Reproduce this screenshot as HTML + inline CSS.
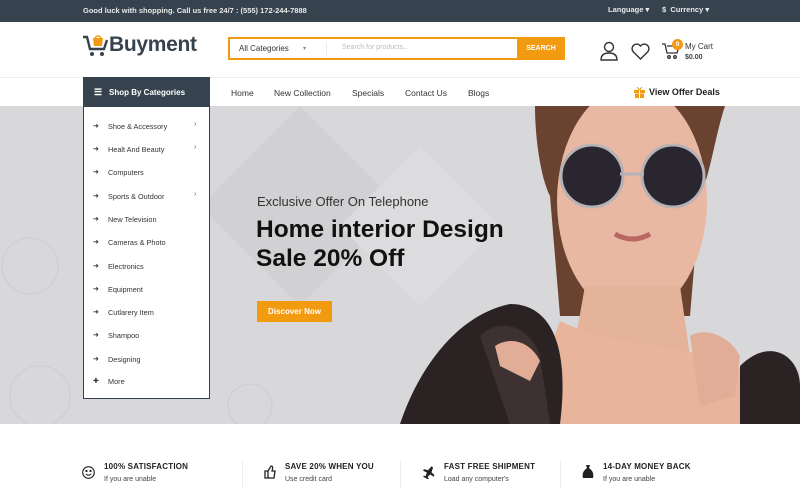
<!DOCTYPE html>
<html><head><meta charset="utf-8"><style>
*{margin:0;padding:0;box-sizing:border-box}
body{width:800px;height:500px;overflow:hidden;font-family:"Liberation Sans",sans-serif;background:#fff;position:relative;color:#222}
.abs{position:absolute}
.top{left:0;top:0;width:800px;height:22px;background:#36434f;color:#e8e8e8;font-size:7.5px;font-weight:bold}
.hdr{top:22px;left:0;width:800px;height:54px;background:#fff}
.nav{top:77px;left:0;width:800px;height:29px;background:#fff;border-top:1px solid #eee}
.nav span{position:absolute;top:10px;font-size:8.5px;color:#333}
.banner{top:106px;left:0;width:800px;height:318px;background:#d8d8da;overflow:hidden}
.side{left:83px;top:77px;width:127px;height:322px;border:1px solid #36434f;background:#fff}
.side .h{height:29px;background:#36434f;color:#fff;font-size:8px;font-weight:bold;padding:10px 0 0 25px}
.side .it{position:absolute;left:24px;font-size:7.3px;color:#333}
.side .ar{position:absolute;left:9px;font-size:7px;color:#333}
.side .ch{position:absolute;left:110px;font-size:7px;color:#555}
.feat{top:462px;font-size:7.5px}
.feat b{display:block;font-size:8px;font-weight:bold;color:#222;letter-spacing:.2px}
.feat i{display:block;font-style:normal;font-size:7px;color:#444;margin-top:5px}
</style></head><body>
<div class="abs top">
 <span class="abs" style="left:83px;top:6px">Good luck with shopping. Call us free 24/7 : (555) 172-244-7888</span>
 <span class="abs" style="left:608px;top:5px">Language &#9662;</span>
 <span class="abs" style="left:662px;top:5px">$ &nbsp;Currency &#9662;</span>
</div>
<div class="abs hdr">
 <svg class="abs" style="left:82px;top:12px" width="28" height="24" viewBox="0 0 28 24"><path d="M1 3h4l3 12h14l3-9" fill="none" stroke="#36434f" stroke-width="2.4"/><circle cx="10" cy="20" r="2" fill="#36434f"/><circle cx="20" cy="20" r="2" fill="#36434f"/><path d="M11 4h10l-1 8h-8z" fill="#f29a10"/><path d="M13 5a3 3 0 016 0" fill="none" stroke="#f29a10" stroke-width="1.5"/></svg>
 <span class="abs" style="left:109px;top:11px;font-size:21px;font-weight:bold;color:#36434f;letter-spacing:-.3px">Buyment</span>
 <div class="abs" style="left:228px;top:15px;width:337px;height:23px;border:2px solid #f29a10;background:#fff"></div>
 <span class="abs" style="left:239px;top:22px;font-size:8px;color:#333">All Categories</span>
 <span class="abs" style="left:303px;top:23px;font-size:6px;color:#888">&#9662;</span>
 <div class="abs" style="left:326px;top:20px;width:1px;height:14px;background:#eee"></div>
 <span class="abs" style="left:342px;top:22px;font-size:7px;color:#bbb">Search for products...</span>
 <div class="abs" style="left:517px;top:15px;width:48px;height:23px;background:#f29a10;color:#fff;font-size:7px;font-weight:bold;text-align:center;line-height:23px">SEARCH</div>
 <svg class="abs" style="left:599px;top:19px" width="20" height="20" viewBox="0 0 20 20" fill="none" stroke="#333" stroke-width="1.4"><circle cx="10" cy="6" r="4.5"/><path d="M2 19c0-5 3-7 8-7s8 2 8 7z"/></svg>
 <svg class="abs" style="left:631px;top:21px" width="19" height="17" viewBox="0 0 19 17" fill="none" stroke="#333" stroke-width="1.4"><path d="M9.5 16L2 8.5A4 4 0 019.5 3a4 4 0 017.5 5.5z"/></svg>
 <svg class="abs" style="left:662px;top:20px" width="18" height="18" viewBox="0 0 18 18" fill="none" stroke="#333" stroke-width="1.3"><path d="M0 2h3l2 9h10l2-7H5"/><circle cx="7" cy="15" r="1.3"/><circle cx="13" cy="15" r="1.3"/></svg>
 <div class="abs" style="left:672px;top:17px;width:11px;height:11px;border-radius:50%;background:#f29a10;color:#fff;font-size:6.5px;font-weight:bold;text-align:center;line-height:11px">0</div>
 <span class="abs" style="left:685px;top:20px;font-size:8px;color:#333">My Cart</span>
 <span class="abs" style="left:685px;top:32px;font-size:7px;color:#36434f;font-weight:bold">$0.00</span>
</div>
<div class="abs nav">
 <span style="left:231px">Home</span><span style="left:274px">New Collection</span><span style="left:352px">Specials</span><span style="left:405px">Contact Us</span><span style="left:468px">Blogs</span>
 <svg class="abs" style="left:634px;top:9px" width="11" height="11" viewBox="0 0 11 11"><rect x="0" y="3" width="11" height="3" fill="#f29a10"/><rect x="1" y="6.5" width="9" height="4.5" fill="#f29a10"/><rect x="5" y="1" width="1" height="10" fill="#fff"/><path d="M5.5 3L3 0M5.5 3L8 0" stroke="#f29a10"/></svg>
 <span style="left:649px;top:9px;font-size:9px;font-weight:bold;color:#222">View Offer Deals</span>
</div>
<div class="abs banner">
 <svg width="800" height="318" style="position:absolute;left:0;top:0">
  <g fill="#d1d1d4"><path d="M300 0l100 100-100 100-100-100z"/><path d="M420 40l80 80-80 80-80-80z" fill="#dcdcde"/></g>
  <g fill="none" stroke="#cdcdcf" stroke-width="1"><circle cx="30" cy="160" r="28"/><circle cx="40" cy="290" r="30"/><circle cx="250" cy="300" r="22"/></g>
  <path d="M535 0h190c-10 30-15 70-25 90l-10 120H560l-10-120c-10-20-15-60-15-90z" fill="#6a4330"/>
  <ellipse cx="632" cy="95" rx="75" ry="115" fill="#e9b8a2"/>
  <path d="M585 180h95l20 140H560z" fill="#e5b29a"/>
  <path d="M560 215c60 30 150 20 200 60v45H520z" fill="#e8b59c"/>
  <circle cx="592" cy="70" r="31" fill="#2a2630" stroke="#b7b2b5" stroke-width="3"/>
  <circle cx="673" cy="70" r="31" fill="#2a2630" stroke="#b7b2b5" stroke-width="3"/>
  <path d="M620 68h24" stroke="#b7b2b5" stroke-width="3"/>
  <path d="M615 128q17 10 35 0q-17 10-35 0z" fill="#c0706a" stroke="#b86860" stroke-width="5"/>
  <path d="M400 318c20-60 60-110 110-120 40 0 60 40 50 120z" fill="#2b2224"/>
  <path d="M480 230c20-20 50-10 60 20l10 68h-40z" fill="#3d3132"/>
  <path d="M740 260c30-30 60-10 60 20v38h-60z" fill="#2b2224"/>
  <path d="M690 230c15-10 40 0 50 20l-5 40-35 10z" fill="#e2ad96"/>
  <path d="M495 240c15-10 35-5 45 15l-10 20-30-15z" fill="#e2ad96"/>
 </svg>
 <span class="abs" style="left:257px;top:88px;font-size:13px;color:#333">Exclusive Offer On Telephone</span>
 <div class="abs" style="left:256px;top:109px;font-size:24.5px;font-weight:bold;color:#111;line-height:29px">Home interior Design<br>Sale 20% Off</div>
 <div class="abs" style="left:257px;top:195px;width:75px;height:21px;background:#f29a10;color:#fff;font-size:8px;font-weight:bold;text-align:center;line-height:21px">Discover Now</div>
</div>
<div class="abs side">
 <div class="h"><span class="abs" style="left:10px;top:9px;font-size:9px">&#9776;</span>Shop By Categories</div>
 <div class="ar" style="top:44px">&#10140;</div><div class="it" style="top:44px">Shoe &amp; Accessory</div><div class="ch" style="top:43px">&#8250;</div>
 <div class="ar" style="top:67px">&#10140;</div><div class="it" style="top:67px">Healt And Beauty</div><div class="ch" style="top:66px">&#8250;</div>
 <div class="ar" style="top:90px">&#10140;</div><div class="it" style="top:90px">Computers</div>
 <div class="ar" style="top:114px">&#10140;</div><div class="it" style="top:114px">Sports &amp; Outdoor</div><div class="ch" style="top:113px">&#8250;</div>
 <div class="ar" style="top:137px">&#10140;</div><div class="it" style="top:137px">New Television</div>
 <div class="ar" style="top:160px">&#10140;</div><div class="it" style="top:160px">Cameras &amp; Photo</div>
 <div class="ar" style="top:184px">&#10140;</div><div class="it" style="top:184px">Electronics</div>
 <div class="ar" style="top:207px">&#10140;</div><div class="it" style="top:207px">Equipment</div>
 <div class="ar" style="top:230px">&#10140;</div><div class="it" style="top:230px">Cutlarery Item</div>
 <div class="ar" style="top:253px">&#10140;</div><div class="it" style="top:253px">Shampoo</div>
 <div class="ar" style="top:277px">&#10140;</div><div class="it" style="top:277px">Designing</div>
 <div class="ar" style="top:299px">&#10010;</div><div class="it" style="top:299px">More</div>
</div>
<div class="abs" style="left:242px;top:461px;width:1px;height:28px;background:#eee"></div>
<div class="abs" style="left:400px;top:461px;width:1px;height:28px;background:#eee"></div>
<div class="abs" style="left:560px;top:461px;width:1px;height:28px;background:#eee"></div>
<svg class="abs" style="left:82px;top:466px" width="13" height="13" viewBox="0 0 13 13" fill="none" stroke="#222" stroke-width="1.1"><circle cx="6.5" cy="6.5" r="5.8"/><circle cx="4.5" cy="5" r=".6" fill="#222"/><circle cx="8.5" cy="5" r=".6" fill="#222"/><path d="M3.8 8q2.7 2.4 5.4 0"/></svg>
<div class="abs feat" style="left:104px"><b>100% SATISFACTION</b><i>If you are unable</i></div>
<svg class="abs" style="left:264px;top:465px" width="12" height="14" viewBox="0 0 12 14" fill="none" stroke="#222" stroke-width="1.3"><path d="M1 6h3v7H1z"/><path d="M4 6l3-5c1.5 0 2 1 1.5 3l-.5 2h3l-1 7H4"/></svg>
<div class="abs feat" style="left:285px"><b>SAVE 20% WHEN YOU</b><i>Use credit card</i></div>
<svg class="abs" style="left:423px;top:466px" width="12" height="13" viewBox="0 0 12 13"><path d="M5 0h2l1 5 4 1v2l-4-.5-1 3.5 2 1v1H3v-1l2-1-1-3.5L0 8V6l4-1z" fill="#222" transform="rotate(30 6 6.5)"/></svg>
<div class="abs feat" style="left:444px"><b>FAST FREE SHIPMENT</b><i>Load any computer's</i></div>
<svg class="abs" style="left:582px;top:465px" width="12" height="15" viewBox="0 0 12 15"><path d="M4 0h4l-1 3h-2z M5 3C1 6 0 9 1 13h10c1-4 0-7-4-10z" fill="#222"/></svg>
<div class="abs feat" style="left:603px"><b>14-DAY MONEY BACK</b><i>If you are unable</i></div>
</body></html>
